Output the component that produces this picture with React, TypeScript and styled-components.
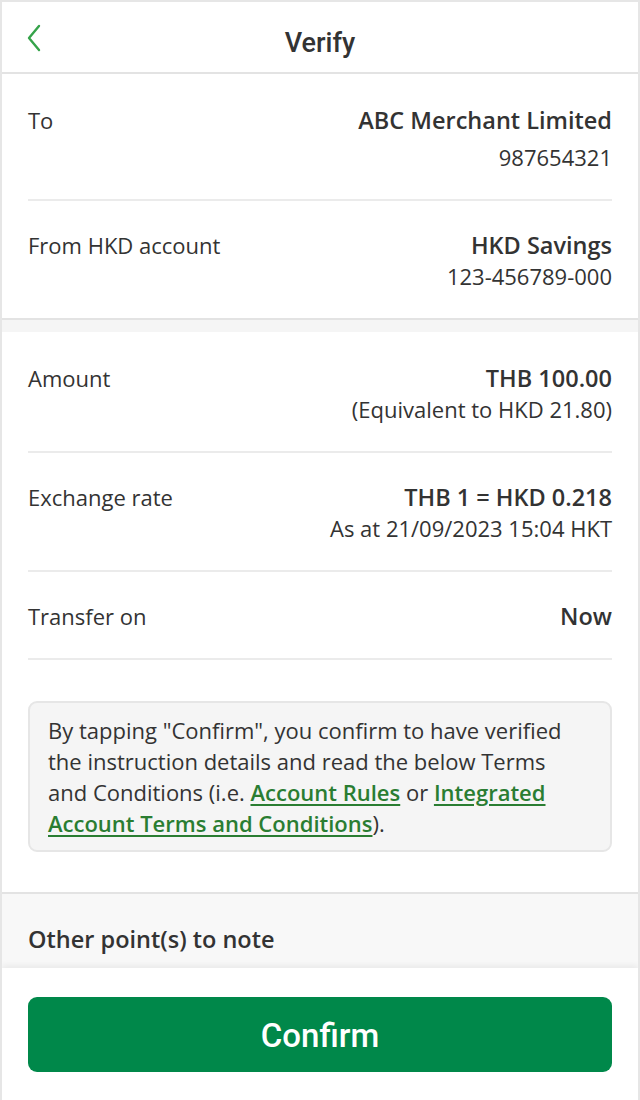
import React from "react";
import styled, { createGlobalStyle } from "styled-components";

const GlobalStyle = createGlobalStyle`
  html, body { margin: 0; padding: 0; background: #ffffff; }
  body { font-family: "Open Sans", "Noto Sans", sans-serif; color: #333333; }
  * { box-sizing: border-box; }
`;

const Frame = styled.div`
  position: relative;
  width: 640px;
  height: 1100px;
  overflow: hidden;
  border: 2px solid #e6e6e6;
  border-bottom: none;
  background: #ffffff;
  display: flex;
  flex-direction: column;
`;

const Header = styled.header`
  height: 72px;
  flex: none;
  display: flex;
  align-items: center;
  justify-content: center;
  padding-top: 11px;
  position: relative;
  border-bottom: 2px solid #e3e3e3;
`;

const BackButton = styled.button`
  position: absolute;
  left: 18px;
  top: 22px;
  width: 28px;
  height: 28px;
  padding: 0;
  border: none;
  background: none;
  display: flex;
  align-items: center;
  justify-content: center;
`;

const Title = styled.h1`
  margin: 0;
  font-family: Roboto, "Noto Sans", sans-serif;
  font-weight: 500;
  font-size: 27px;
  color: #333333;
`;

const Section = styled.section<{ $tail?: number }>`
  background: #ffffff;
  padding: 0 26px ${(p) => p.$tail ?? 0}px;
  border-bottom: 2px solid #e3e3e3;
`;

const Gap = styled.div`
  height: 12px;
  background: #f5f5f5;
`;

const Row = styled.div<{ $last?: boolean }>`
  display: flex;
  justify-content: space-between;
  align-items: flex-start;
  padding: 29px 0 26px;
  border-bottom: ${(p) => (p.$last ? "none" : "2px solid #ebebeb")};
  &:first-child {
    padding-top: 31px;
  }
`;

const Label = styled.div`
  font-size: 22px;
  line-height: 31px;
  color: #333333;
`;

const Values = styled.div`
  display: flex;
  flex-direction: column;
  align-items: flex-end;
  text-align: right;
`;

const Main = styled.div`
  font-weight: 600;
  font-size: 23.5px;
  line-height: 31px;
  color: #333333;
`;

const Sub = styled.div<{ $spaced?: boolean }>`
  margin-top: ${(p) => (p.$spaced ? 6 : 0)}px;
  font-size: 22px;
  line-height: 31px;
  color: #333333;
`;

const Note = styled.div`
  margin-top: 41px;
  background: #f5f5f5;
  border: 2px solid #e6e6e6;
  border-radius: 9px;
  padding: 12px 38px 11px 18px;
  font-size: 22px;
  line-height: 31px;
  color: #333333;
`;

const Link = styled.a`
  color: #2a7d32;
  font-weight: 600;
  text-decoration: underline;
  text-underline-offset: 3px;
  text-decoration-thickness: 2px;
`;

const OtherSection = styled.section`
  background: #f8f8f8;
  padding: 30px 26px 60px;
  flex: 1;
`;

const OtherTitle = styled.h2`
  margin: 0;
  font-size: 23.5px;
  line-height: 31px;
  font-weight: 600;
  color: #333333;
`;

const Footer = styled.footer`
  position: absolute;
  left: 0;
  right: 0;
  bottom: 0;
  height: 132px;
  background: #ffffff;
  box-shadow: 0 -3px 6px rgba(0, 0, 0, 0.06);
  padding: 29px 26px 0;
`;

const ConfirmButton = styled.button`
  width: 100%;
  height: 75px;
  border: none;
  border-radius: 9px;
  background: #00884a;
  color: #ffffff;
  font-family: Roboto, "Noto Sans", sans-serif;
  font-weight: 500;
  font-size: 33px;
  padding-top: 2px;
`;

export default function App() {
  return (
    <>
      <GlobalStyle />
      <Frame>
        <Header>
          <BackButton aria-label="Back">
            <svg width="16" height="28" viewBox="0 0 16 28" fill="none">
              <path d="M13 2 L3 14 L13 26" stroke="#35a34a" strokeWidth="2.4" strokeLinecap="round" strokeLinejoin="round" />
            </svg>
          </BackButton>
          <Title>Verify</Title>
        </Header>

        <Section>
          <Row>
            <Label>To</Label>
            <Values>
              <Main>ABC Merchant Limited</Main>
              <Sub $spaced>987654321</Sub>
            </Values>
          </Row>
          <Row $last>
            <Label>From HKD account</Label>
            <Values>
              <Main>HKD Savings</Main>
              <Sub>123-456789-000</Sub>
            </Values>
          </Row>
        </Section>
        <Gap />
        <Section $tail={40}>
          <Row>
            <Label>Amount</Label>
            <Values>
              <Main>THB 100.00</Main>
              <Sub>(Equivalent to HKD 21.80)</Sub>
            </Values>
          </Row>
          <Row>
            <Label>Exchange rate</Label>
            <Values>
              <Main>THB 1 = HKD 0.218</Main>
              <Sub>As at 21/09/2023 15:04 HKT</Sub>
            </Values>
          </Row>
          <Row>
            <Label>Transfer on</Label>
            <Values>
              <Main>Now</Main>
            </Values>
          </Row>
          <Note>
            By tapping "Confirm", you confirm to have verified the instruction details and read the below Terms and Conditions (i.e.{" "}
            <Link href="#">Account Rules</Link> or{" "}
            <Link href="#">Integrated Account Terms and Conditions</Link>).
          </Note>
        </Section>
        <OtherSection>
          <OtherTitle>Other point(s) to note</OtherTitle>
        </OtherSection>
        <Footer>
          <ConfirmButton>Confirm</ConfirmButton>
        </Footer>
      </Frame>
    </>
  );
}
